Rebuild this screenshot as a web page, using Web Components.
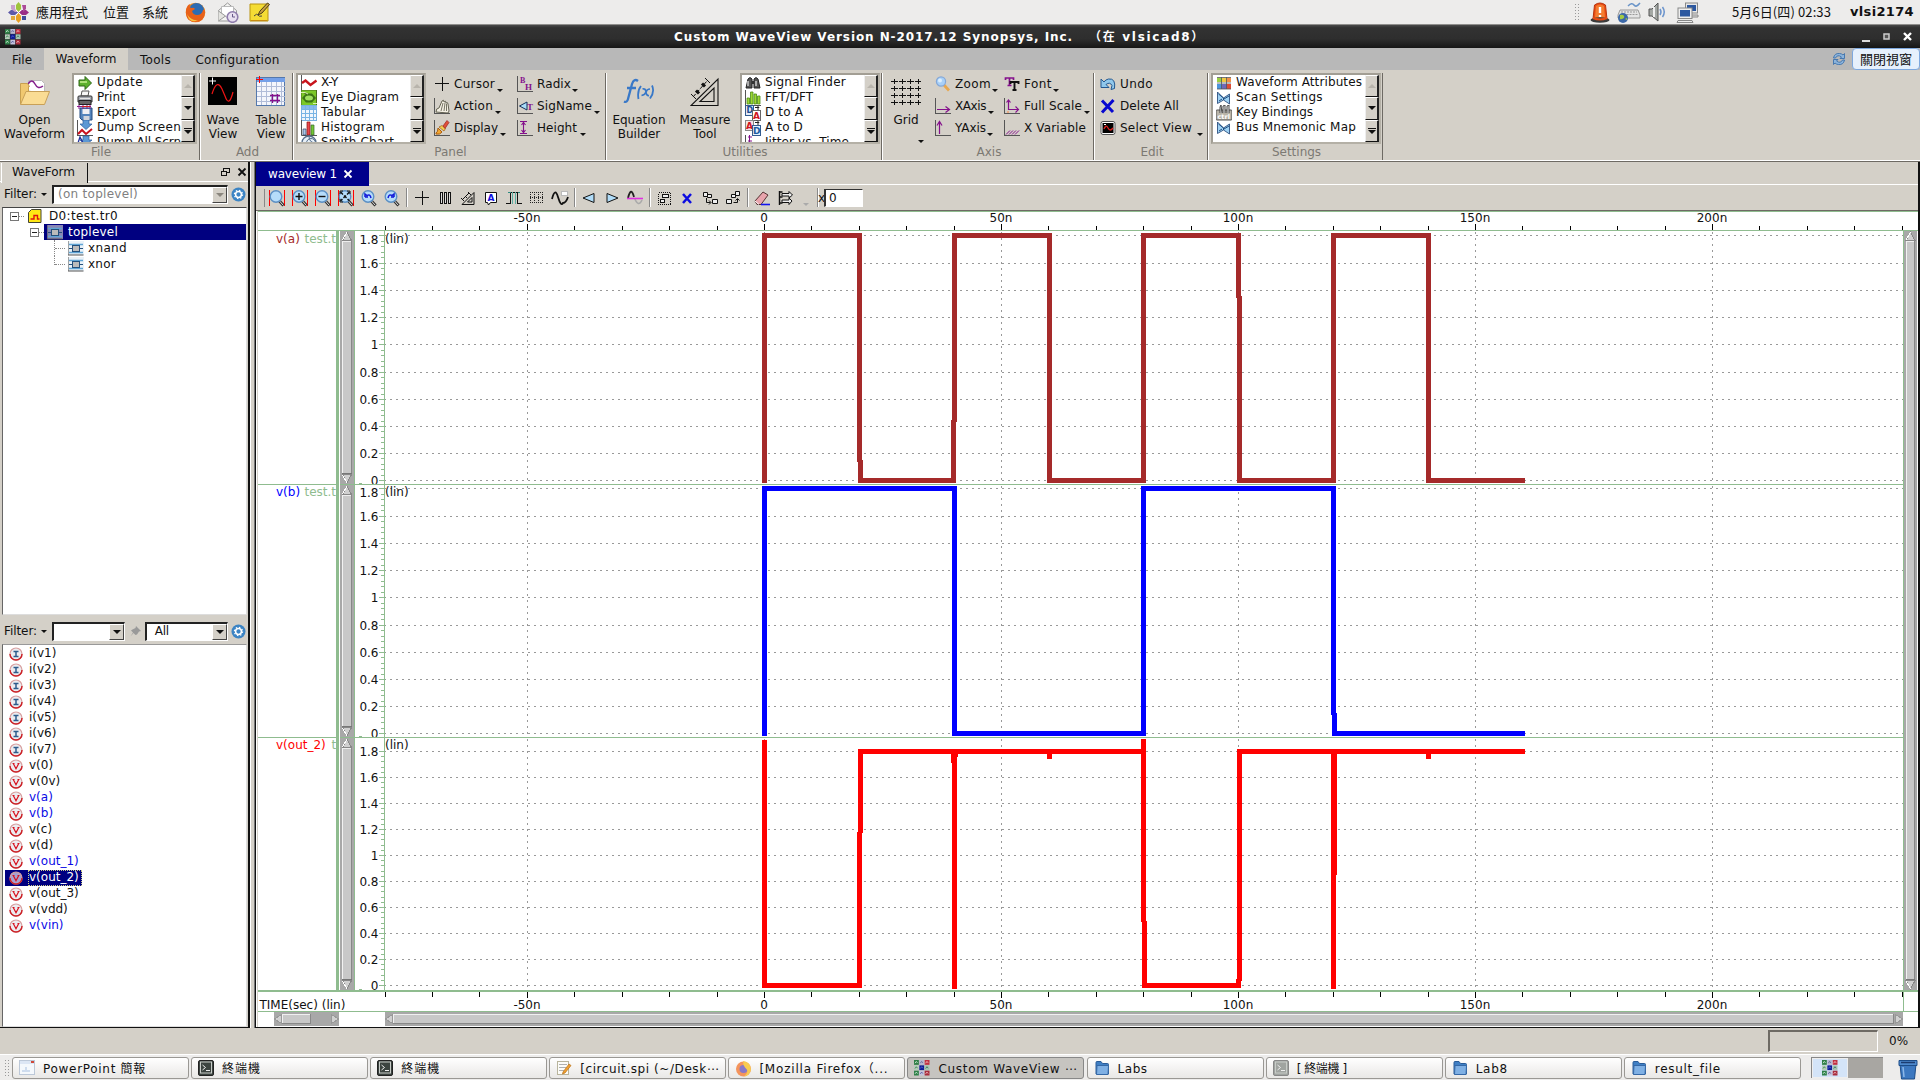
<!DOCTYPE html>
<html lang="zh-Hant">
<head>
<meta charset="utf-8">
<title>Custom WaveView</title>
<style>
html,body{margin:0;padding:0;width:1920px;height:1080px;overflow:hidden;background:#d4d0c8}
body{font:12px/15px "DejaVu Sans","Noto Sans CJK TC",sans-serif;color:#111}
</style>
</head>
<body>
<wave-desktop></wave-desktop>
<script>
const svg=(w,h,body,extra='')=>`<svg width="${w}" height="${h}" viewBox="0 0 ${w} ${h}" ${extra}>${body}</svg>`;
const crisp='shape-rendering="crispEdges"';
const L='<path d="M.5 0v15.5H16" fill="none" stroke="#555" shape-rendering="crispEdges"/>';
const mag=(inner,red)=>svg(18,18,(red?'<path d="M1.500 1v16M16.500 1v16" stroke="#f00" shape-rendering="crispEdges"/>':'')+
 '<path d="M11.500 12l4 4.500" stroke="#333" stroke-width="3"/><path d="M11.500 12l3.500 4" stroke="#ddd" stroke-width="1"/><circle cx="8" cy="7.500" r="5.800" fill="#b5dcfa" stroke="#5b8fc4" stroke-width="1.400"/>'+inner);
const app=(s)=>{const c=['#2e7d45','#b8b8cf','#c03040','#b8ccbc','#101c96','#a8c4b4','#2f8048','#c4c4dc','#a82c3c'],m=['#c8e8d0','#6868a0','#f0b8bc','#3c8c54','#5060d0','#3c7c5c','#c8e8d0','#5858a0','#f0b8bc'],t=s/3;
 return svg(s,s,c.map((k,i)=>{const x=(i%3)*t,y=Math.floor(i/3)*t;return `<rect x="${x}" y="${y}" width="${t-.5}" height="${t-.5}" fill="${k}"/><path d="M${x+1} ${y+t*.6}l1.300-1.800l1.200 1.500" stroke="${m[i]}" stroke-width=".9" fill="none"/>`}).join(''))};
const folder=(s)=>svg(s,s,'<path d="M2 2.500q0-1 1-1h4l1.500 2h5q1 0 1 1V14H2z" fill="#3f7fc4" stroke="#2a5c98"/><path d="M3 5.500h11.500l-.5 9H2.500z" fill="#7fb0e4" stroke="#3568a6"/>');
const term=(a,b)=>svg(16,16,`<rect x=".5" y=".5" width="15" height="15" rx="1.500" fill="${a}" stroke="${b}"/><rect x="2.500" y="2" width="11" height="11" fill="none" stroke="#c8ccc8"/><path d="M4.500 5l3 2.500l-3 2.500M8 10.500h4" fill="none" stroke="#eee"/>`);
const sigv=(c,k)=>svg(14,14,`<circle cx="7" cy="7" r="6" fill="${k||'#ececf0'}" stroke="#d8a0a0" stroke-width="1.200"/><path d="M1 7a6 6 0 0 0 12 0" fill="none" stroke="#cc2026" stroke-width="1.400"/>`+(c=='V'?'<path d="M4.400 4.800L7 9.800l2.600-5M3.500 4.500h2M8.500 4.500h2" stroke="#d8101c" stroke-width="1.200" fill="none"/>':'<path d="M4.500 4.500h5M4.500 9.500h5M7 4.500v5" stroke="#2c5c8c" stroke-width="1.500"/>'));
const block=(d)=>svg(16,15,`<rect width="16" height="14" fill="${d?'#8886b4':'#eaf2f8'}"/><path d="M0 0v14h15.500" stroke="#555" fill="none"/><path d="M1 3.500h14M1 11.500h14" stroke="#5fa4d4" stroke-width="1.500"/><rect x="4.500" y="4.500" width="7" height="6" fill="#bbb" stroke="#24507c"/><path d="M1 7.500h3M12 7.500h3" stroke="#24507c"/>`);
const scan=svg(16,16,'<path d="M1.500 2v11.500l6-3.500l6 4V4l-6 4z" fill="#9fd2f4" stroke="#2c5080" stroke-width=".9"/><path d="M2.500 4l5 4v2M13 6l-5 3M3 11l3-2" fill="none" stroke="#1c4c80"/>');
const I={
centos:svg(21,21,'<path d="M8 7V3l2.500-3L13 3v4l-2.500 3z" fill="#9fc43c"/><path d="M14 8h4l3 2.500L18 13h-4l-3-2.500z" fill="#9a2c86"/><path d="M7 8H3L0 10.500L3 13h4l3-2.500z" fill="#5c58a8"/><path d="M8 14v4l2.500 3L13 18v-4l-2.500-3z" fill="#e8a024"/><path d="M3 3h4v4l3 3H7L3 7z" fill="#c8a0cc"/><path d="M14 3h4v4l-3 3V7z" fill="#ac4c98"/><path d="M3 14l4 0v4H3z" fill="#e0a840"/><path d="M14 14h4v4h-4z" fill="#404c9c"/><path d="M8 8l5 5M13 8l-5 5" stroke="#fff"/>'),
firefox:svg(21,21,'<circle cx="10.500" cy="10.500" r="9.800" fill="#f08a1c"/><circle cx="11.500" cy="8.500" r="7.500" fill="#2c6cb4"/><path d="M1 8q1-5 4-6q-1 3 1 4q3-1 4 1l-3 2q1 4 5 4q5 0 6-5q2-1 2 3q-1 9-9.500 9Q2 20 1 12z" fill="#e8611a"/><path d="M2 12q4 7 11 6q-5 3-9-1z" fill="#fbc440"/>'),
mail:svg(22,21,'<path d="M1.500 8.500l9-7.500l9 7.500v10.500h-18z" fill="#f4f4f2" stroke="#999"/><path d="M4.500 4.500h12v8l-6 3l-6-3z" fill="#fff" stroke="#bbb"/><path d="M1.500 9l7 5l-7 5" fill="#e4e4e0" stroke="#999"/><circle cx="15.500" cy="15" r="5.300" fill="#e8e0f0" stroke="#8e7cac" stroke-width="1.600"/><path d="M15.500 12v3h2.500" fill="none" stroke="#665888"/>'),
note:svg(22,21,'<path d="M1 2h18v17H1z" fill="#f4dc34" stroke="#b89410"/><path d="M2 18h16v1H2z" fill="#c88c10"/><path d="M9 13l2-4L18.500 1l2 1.500L13 11z" fill="#c8a040" stroke="#4a3c14"/><path d="M5 14q3-3 4-1t4 1" fill="none" stroke="#444"/>'),
alarm:svg(20,21,'<path d="M3 17L4.500 3Q10-1 15.500 3L17 17z" fill="#e84c14" stroke="#b8340c"/><path d="M5 16L6 4q4-3 8 0l1 12z" fill="#f47c30"/><ellipse cx="10" cy="18" rx="9.500" ry="2.800" fill="#3c3c3c"/><path d="M3 16q7 3 14 0" stroke="#e84c14" stroke-width="2" fill="none"/><path d="M10 5v6M10 13v2" stroke="#fff" stroke-width="2.400"/>'),
kbd:svg(24,21,'<path d="M11 4q4-4 6-1t6-2" fill="none" stroke="#6a94c8" stroke-width="1.500"/><path d="M3 8h18l2 5v3H1v-3z" fill="#e4e4e4" stroke="#999"/><path d="M4 10h16M3.500 12.500h17" stroke="#999" stroke-dasharray="2 1"/><circle cx="6" cy="16" r="5" fill="#3c68a8"/><path d="M3 13q3-1 4 1t-2 3t-2-1zM8 17l2-1v2z" fill="#a4cc44"/>'),
speaker:svg(20,21,'<path d="M1 7h3l6-6v18l-6-5H1z" fill="#a4a8a4" stroke="#555"/><path d="M6 5v10" stroke="#eee" stroke-width="2"/><path d="M12 7q2 3 0 6M14.500 5q3.500 5 0 10" fill="none" stroke="#6c94cc" stroke-width="1.500"/>'),
pcs:svg(23,21,'<rect x="9.500" y="1" width="12" height="10" fill="#e8e8e8" stroke="#888"/><rect x="11" y="3" width="9" height="6" fill="#2c58a0"/><path d="M12 13h10v2H12z" fill="#ddd" stroke="#888"/><rect x="2" y="6" width="14" height="10.500" fill="#eee" stroke="#888"/><rect x="4" y="8" width="10" height="6.500" fill="#2c58a0"/><path d="M2 18.500h14l1 2H1z" fill="#eee" stroke="#888"/>'),
app16:app(16),
refresh:svg(14,14,'<path d="M1.500 6q1-5 6-4.500q2 0 3.500 1.500l1.500-1.500v5H8l1.500-1.500q-4-3-6 1zM12.500 8q-1 5-6 4.500q-2 0-3.500-1.500l-1.500 1.500v-5H6L4.500 9q4 3 6-1z" fill="#8cb4dc" stroke="#3c70ac" stroke-width=".9"/>'),
min:svg(9,11,'<path d="M.5 8.500h8" stroke="#ddd" stroke-width="2"/>',crisp),
max:svg(9,11,'<rect x="2" y="3" width="5" height="5" fill="#555" stroke="#ccc" stroke-width="1.500"/>'),
close:svg(9,11,'<path d="M1 2l7 7M8 2L1 9" stroke="#fff" stroke-width="2.400"/>'),
open:svg(32,28,'<path d="M9.500 13V2.500h13l3 3V16z" fill="#fff" stroke="#bbb"/><path d="M9 6q4-6 7 0t8 2" fill="none" stroke="#84208c" stroke-width="1.500"/><path d="M1.500 26V5.500h7l2 3h-1V14h15V26z" fill="#f0c870" stroke="#c8a050"/><path d="M1.500 26.500L7 13.500h23.500l-5 13z" fill="#fadc94" stroke="#c8a058"/>'),
waveview:svg(30,29,'<rect width="29" height="28" fill="#000"/><path d="M1 4h7M4.500 .5v7" stroke="#fff"/><path d="M4 17q5-16 10-5l3 7q4 12 8-4" fill="none" stroke="#f01414" stroke-width="1.200"/>'),
table:svg(30,31,'<rect x=".5" y="1.500" width="28" height="28" fill="#f4f6fc" stroke="#5478ac"/><rect x="1" y="2" width="28" height="4" fill="#74a0e8"/><path d="M5.500 6v23M10.500 6v23M15.500 6v23M20.500 6v23M25.500 6v23M1 10.500h28M1 15.500h28M1 20.500h28M1 25.500h28" stroke="#b0bcd8" shape-rendering="crispEdges"/><path d="M0 3.500h7M3.500 0v7" stroke="#f00" /><path d="M16.500 18v9M21.500 18v9M14 19.500h10M14 24.500h10" stroke="#84108c" stroke-width="1.300"/>'),
fx:svg(34,28,'<path d="M16 3q-4-3-6 3L6 21q-1 4-4 2.500M5 10h9" fill="none" stroke="#3878c8" stroke-width="2.300"/><path d="M19 8q-4 5-2.500 13M30 7.500q3 6-2 13" fill="none" stroke="#3878c8" stroke-width="1.800"/><path d="M20.500 11q3-1 3.500 3t3 3.500M28 11q-3 0-4 3t-4.500 3.500" fill="none" stroke="#3878c8" stroke-width="1.700"/>'),
measure:svg(30,30,'<path d="M1 28.500h27V2zM10 24.500h14V11z" fill="none" stroke="#111" stroke-width="1.100"/><path d="M3 20L17 4" stroke="#111" stroke-dasharray="4 1.500"/><path d="M1 17l5 5M15 1l5 5" stroke="#111"/><path d="M6 13.500l3 3M12 6.500l3 3" stroke="#111" stroke-width="3"/>'),
grid:svg(30,30,[4,11,18,25].map(y=>[3,11,19,27].map(x=>`<path d="M${x-3} ${y}.5h${x>20?6:7}M${x}.5 ${y-2}v5" stroke="#111"/>`).join('')).join(''),crisp),
update:svg(16,16,'<path d="M2 5h6V1.500l6.500 6.500L8 14.500V11H2z" fill="#5cb02c" stroke="#2c6414"/><path d="M3 7h7" stroke="#c8f090" stroke-width="1.500"/>'),
print:svg(16,16,'<path d="M4 6l1-5h7l-1 5z" fill="#f8f8f8" stroke="#555"/><path d="M1 7q0-1 1-1h12q1 0 1 1v5H1z" fill="#a4a8b0" stroke="#333"/><rect x="2" y="10.500" width="12" height="4" fill="#666" stroke="#222"/><path d="M3 8.500h10" stroke="#e4e4e4"/>'),
export:svg(16,16,'<path d="M3 3h12v12H5l-2-2z" fill="#5484bc" stroke="#244c80"/><rect x="5.500" y="4" width="7" height="5" fill="#f0f0f4"/><rect x="6.500" y="11" width="6" height="4" fill="#d0d4dc"/><path d="M0 1.500h14M2 4V0M6 4V0M10 4V0M13 4V0" stroke="#8c1c8c"/><path d="M5 1.500h8" stroke="#d02020"/>'),
dump:svg(16,16,L+'<path d="M6 0h6v4h3L9 9.500L3 4h3z" fill="#5c98d4" stroke="#2c5c9c" stroke-width=".7"/><path d="M1 14l4-4l4 4l6-5" fill="none" stroke="#c8101c" stroke-width="2"/>'),
dumpall:svg(16,16,'<path d="M6 1h6v4h3l-6 5L3 5h3z" fill="#5c98d4" stroke="#2c5c9c" stroke-width=".7"/><path d="M1 8l2-6l3 6M1 10l4-2l4 5l6-4" fill="none" stroke="#20309c" stroke-width="1.300"/><path d="M1 12l5-2l4 4l5-3" fill="none" stroke="#c8101c" stroke-width="1.500"/>'),
xy:svg(16,16,'<path d="M.5 0v15" stroke="#555"/><path d="M1 8l3.500-2.500l5 4.500L15.500 5.500" fill="none" stroke="#c8141c" stroke-width="2.400"/>'),
eye:svg(16,16,'<rect width="15.500" height="15.500" fill="#7cc828" stroke="#486c1c"/><path d="M1 8L5 3.500h6L15 8l-4 4.500H5z" fill="#3c7414"/><ellipse cx="8" cy="8" rx="4" ry="2.500" fill="#a0e060"/><path d="M0 2.500h4l3 1.500M16 13.500h-4" stroke="#d8f0b0"/>'),
tabular:svg(16,16,'<rect x=".5" y=".5" width="15" height="15" fill="#f0f6fc" stroke="#78b0e0"/><rect x="1" y="1" width="15" height="3" fill="#88b8ec"/><path d="M4.500 1v15M8.500 1v15M12.500 1v15M0 4.500h16M0 8.500h16M0 12.500h16" stroke="#78b4e4"/>',crisp),
histo:svg(16,16,'<path d="M.5 0v15.500H16" stroke="#555" fill="none"/><path d="M2 9h3v6H2z" fill="#a8c8e8" stroke="#346" stroke-width=".7"/><path d="M6 2h3v13H6z" fill="#e8484c" stroke="#811" stroke-width=".7"/><path d="M10 5h3v10h-3z" fill="#74c834" stroke="#363" stroke-width=".7"/>'),
smith:svg(16,16,'<circle cx="8" cy="8" r="7" fill="#e8f0f8" stroke="#58708c" stroke-width="1.300"/><circle cx="10" cy="8" r="4.500" fill="none" stroke="#58708c"/><path d="M1 8h14M8 1q0 7 7 7" fill="none" stroke="#58708c"/>'),
cursor:svg(16,16,'<path d="M1 7.500h14M8.500 1v14" stroke="#111"/>',crisp),
action:svg(16,16,L+'<path d="M2 14q0-4 3-4l3-7q2-2 2 1q2-2 2 1q2-1 2 1l1 7l-1 2z" fill="#f4f0e4" stroke="#554" stroke-width=".9"/><path d="M7 13L9 5M10 13l1-8M12.500 13V6" stroke="#554" stroke-width=".8"/>'),
display:svg(16,16,L+'<path d="M2 13q2-1 2-5l4 4q-2 3-6 2z" fill="#f4a830" stroke="#a85c10"/><path d="M5 7l5 4l1.500-2.500l-3.500-3z" fill="#f0d050" stroke="#a85c10" stroke-width=".7"/><path d="M9 6l4-5.500l2 2L11 8.500z" fill="#e05038" stroke="#922" stroke-width=".7"/>'),
radix:svg(17,17,L+'<text x="3" y="7" font-family="Liberation Serif" font-size="8" font-weight="bold" fill="#84108c">B</text><text x="8" y="14" font-family="Liberation Serif" font-size="9" font-weight="bold" fill="#84108c">H</text>'),
signame:svg(17,17,L+'<path d="M2.500 8L10 4v8z" fill="#a8dcf8" stroke="#14305c"/><text x="10" y="12" font-family="Liberation Serif" font-size="9" font-weight="bold" fill="#84108c">T</text>'),
height:svg(16,16,L+'<path d="M3 1.500h7M3 13.500h7M6.500 2v11M4.500 5l2-2.500l2 2.500M4.500 10l2 2.500l2-2.500" fill="none" stroke="#84108c" stroke-width="1.100"/>'),
binoc:svg(16,16,'<path d="M1 13l2-9q2-3 4 0v9zM9 13V4q2-3 4 0l2 9z" fill="#555" stroke="#222"/><path d="M3 11V6M11 11V6" stroke="#ddd" stroke-width="1.300"/><path d="M7 6h2v3H7z" fill="#333"/>'),
fft:svg(16,16,'<path d="M.5 0v15.500H16" stroke="#555" fill="none"/><path d="M2 8h2.500v6H2zM5.500 2H8v12H5.500zM9 4h2.500v10H9zM12.500 6H15v8h-2.500z" fill="#9cd834" stroke="#4c8c14" stroke-width=".8"/>'),
d2a:svg(16,16,'<rect x=".5" y=".5" width="8" height="10" fill="#e4ecf8" stroke="#345c90"/><text x="1.500" y="8" font-size="8" font-weight="bold" fill="#1c4c90" font-family="DejaVu Sans">D</text><rect x="7.500" y="5.500" width="8" height="10" fill="#fff" stroke="#666"/><text x="8" y="14" font-size="9" font-weight="bold" fill="#d01420" font-family="DejaVu Sans">A</text><path d="M10 2.500h4l-2-2M13 5V3" stroke="#222" fill="none"/>'),
a2d:svg(16,16,'<rect x=".5" y=".5" width="8" height="10" fill="#f4e4e4" stroke="#888"/><text x="1" y="8.500" font-size="9" font-weight="bold" fill="#d01420" font-family="DejaVu Sans">A</text><rect x="7.500" y="5.500" width="8" height="10" fill="#e4f0fc" stroke="#345c90"/><text x="8" y="14" font-size="9" font-weight="bold" fill="#1c5ca0" font-family="DejaVu Sans">D</text><path d="M10 2.500h4l-2-2M13 5V3" stroke="#222" fill="none"/>'),
jitter:svg(16,16,'<path d="M.5 0v16" stroke="#555"/><path d="M3 2h4M3 6h4M4.500 0v12M3 9h4" stroke="#84108c"/>'),
zoom:svg(16,16,'<path d="M9 9l5 5.500" stroke="#e8a850" stroke-width="2.800"/><circle cx="6" cy="5.500" r="4.600" fill="#a8d0f8" stroke="#84a8d8" stroke-width="1.200"/><circle cx="5" cy="4.500" r="2" fill="#dceefc"/>'),
xaxis:svg(16,16,L+'<path d="M2 11.500h12M10.500 8.500l4 3l-4 3" fill="none" stroke="#84108c" stroke-width="1.200"/>'),
yaxis:svg(16,16,L+'<path d="M4.500 14V2M2 5.500l2.500-4l2.500 4" fill="none" stroke="#84108c" stroke-width="1.200"/>'),
font:svg(16,16,'<path d="M1.500 4V2h8v2M5.500 2v8M3.500 9.500h4" fill="none" stroke="#84108c" stroke-width="1.700"/><path d="M6.500 8V6h8v2M10.500 6v8M8.500 14h4" fill="none" stroke="#111" stroke-width="1.900"/>'),
full:svg(16,16,L+'<path d="M4.500 12V2M2.500 4.500L4.500 2l2 2.500M4.500 11.500h10M11.500 8.500l3 3l-3 3" fill="none" stroke="#84108c" stroke-width="1.200"/><path d="M4 13v2" stroke="#f84"/>'),
xvar:svg(16,16,L+'<path d="M2 14.500l4-4M5 14.500l4-4M8 14.500l4-4M11 14.500l4-4" stroke="#84108c"/>'),
undo:svg(16,16,'<path d="M1 3v8.500h8L6 8.500q4-3 6 1l-1 4l3.500-1Q16 2 8.500 3Q5.500 3.500 4 6z" fill="#90c8ec" stroke="#245890"/>'),
delall:svg(16,16,'<path d="M2 2.500l11 11.500M13.500 2L2 14.500" stroke="#0808d0" stroke-width="3"/>'),
selview:svg(16,16,'<rect x="1" y="1.500" width="14" height="13" rx="2" fill="#fff" stroke="#555"/><rect x="2.500" y="3" width="11" height="10" fill="#000"/><path d="M4 9q2-5 4-1t5 0" fill="none" stroke="#e02020" stroke-width="1.300"/><path d="M4 4.500h2" stroke="#fff"/>'),
attrs:svg(16,16,'<path d="M1 3h5v4H1z" fill="#9cd040"/><path d="M6 3h5v4H6z" fill="#f0c840"/><path d="M11 3h4v4h-4z" fill="#f09048"/><path d="M1 9h5v5H1z" fill="#4c94dc"/><path d="M6 9h5v5H6z" fill="#7068b8"/><path d="M11 9h4v5h-4z" fill="#e04c34"/><path d="M1 2.500h14M1 8h14M1 14h14M5.500 2v12M10.500 2v12" stroke="#555" stroke-width=".8"/>'),
scan,
keyb:svg(16,16,'<rect x="0" y="5" width="16" height="10" rx="1" fill="#b8b4a8" stroke="#555"/><path d="M4 8V2l1-2l1 8M7 8V1l2-1v8M11 8V1l2-1v8" fill="#eee" stroke="#333" stroke-width=".9"/><text x="1.500" y="14" font-size="6.500" font-weight="bold" fill="#fff" font-family="DejaVu Sans">ctrl</text>'),
gear:svg(15,15,'<circle cx="7.500" cy="7.500" r="7" fill="#3c84c4"/><circle cx="7.500" cy="7.500" r="2.900" fill="none" stroke="#fff" stroke-width="1.500"/><circle cx="7.500" cy="7.500" r="4.100" fill="none" stroke="#fff" stroke-width="1.200" stroke-dasharray="1.400 1.820"/>'),
pin:svg(13,13,'<path d="M7 1l5 5l-2 .5l-2 3l-1.500 .5L4.500 8l-3 3.500L4 7.500L2 5.500l1.500-1L6.500 3z" fill="#999"/>'),
float:svg(10,10,'<path d="M3.500 4V1h5.500v4.500H6.500M3.500 1.500h5.500" fill="none" stroke="#111"/><path d="M1 4.500h5.500v4H1zM1 4h5.500" fill="none" stroke="#111"/>',crisp),
x10:svg(10,10,'<path d="M1.500 1.500l7 7M8.500 1.500l-7 7" stroke="#111" stroke-width="1.800"/>'),
xw:svg(10,10,'<path d="M1.500 1.500l7 7M8.500 1.500l-7 7" stroke="#fff" stroke-width="1.800"/>'),
trfile:svg(14,14,'<path d="M.500 3.500l3-3h9.500v13H.500z" fill="#ffe814" stroke="#443"/><path d="M2.500 10h3.500V6.500h3.500V10h2" fill="none" stroke="#e01010" stroke-width="1.400"/>'),
blk:block(false),blkd:block(true),
sI:sigv('I'),sV:sigv('V'),sVs:sigv('V','#a8a0d0'),
z1:mag('',1),
z2:mag('<path d="M4.500 7.500h7M8 4v7" stroke="#111" stroke-width="1.400"/>',1),
z3:mag('<path d="M4.500 7.500h7" stroke="#111" stroke-width="1.400"/>',1),
z4:mag('<path d="M3.500 3l9 9M12.500 3l-9 9" stroke="#111" stroke-width="1.400" stroke-dasharray="3.500 1.500"/><path d="M3 2h3M10 2h3M3 13h3M3 2v3M13 2v3M3 10v3" stroke="#111"/>',1),
z5:mag('<path d="M5 8V5l2 1.500q3-2 4 2.500M5 8h3" fill="none" stroke="#1018d8" stroke-width="1.500"/>'),
z6:mag('<path d="M11 8V5L9 6.500q-3-2-4 2.500M11 8H8" fill="none" stroke="#1018d8" stroke-width="1.500"/>'),
bars:svg(18,18,'<path d="M4.500 3.500h2v11h-2zM8.500 3.500h2v11h-2zM12.500 3.500h2v11h-2z" fill="#ddd" stroke="#111"/>',crisp),
tri:svg(18,18,'<path d="M3 15.500h12V3.500zM8.500 13h4.500V8.500z" fill="none" stroke="#111"/><path d="M3 11l7-7M2 9l3 3M9 3l3 3M6 7l2 2" stroke="#111"/>'),
abox:svg(18,18,'<path d="M3.500 3.500h11v10h-6l-2 2.500l-1-2.500h-2z" fill="#fff" stroke="#111"/><text x="5.500" y="11.500" font-size="9" font-weight="bold" fill="#1010e0" font-family="DejaVu Sans">A</text>'),
pulse:svg(18,18,'<path d="M1 14.500h4.500v-11h3M9 3.500h3.500v11H17" fill="none" stroke="#111"/><path d="M7.500 3v12M10.500 3v12" stroke="#5cb0a4"/><path d="M3 3.500h3M13 3.500h2" stroke="#2c8c80"/>',crisp),
dots:svg(18,18,[3,8,13].map(y=>`<path d="M2 ${y}.5h14" stroke="#222" stroke-dasharray="1 1"/>`).join('')+[3,7,11,15].map(x=>`<path d="M${x-1}.5 3v12" stroke="#222" stroke-dasharray="1 1"/>`).join(''),crisp),
curve:svg(18,18,'<path d="M1 10q3-12 6-2t5 6q3 0 5-6" fill="none" stroke="#111" stroke-width="1.800"/><rect x="10.500" y="2.500" width="6" height="4" fill="#fff" stroke="#bbb"/>'),
left:svg(18,18,'<path d="M3 9l11-4.500v9z" fill="#b0dcf8" stroke="#111"/>'),
right:svg(18,18,'<path d="M15 9L4 4.500v9z" fill="#b0dcf8" stroke="#111"/>'),
curve2:svg(18,18,'<path d="M2 9q3-12 6-1" fill="none" stroke="#222" stroke-width="1.800"/><path d="M8.500 9q4 10 7.500 2" fill="none" stroke="#aaa" stroke-width="1.600"/><path d="M1 9.500h16" stroke="#e030e0" stroke-width="1.600"/>'),
dsel:svg(18,18,'<rect x="3.500" y="3.500" width="12" height="12" fill="none" stroke="#111" stroke-dasharray="1 1"/><path d="M7.500 5.500h6v3h-6zM5.500 10.500h4v3h-4z" fill="#eee" stroke="#111"/>',crisp),
bx:svg(18,18,'<path d="M5 5l8 9M13 5l-8 9" stroke="#0c0ce0" stroke-width="2.500"/>'),
move1:svg(18,18,'<path d="M2.500 3.500h4v4h-4zM6.500 5.500h4v3h-4zM11.500 10.500h5v4h-5z" fill="#eee" stroke="#111"/><path d="M5.500 9v4.500h4M8 11.500l2 2l-2 2" fill="none" stroke="#111"/>'),
move2:svg(18,18,'<path d="M11.500 2.500h4v4h-4zM7.500 5.500h4v3h-4zM2.500 10.500h5v4h-5z" fill="#eee" stroke="#111"/><path d="M9.500 13.500h4V10M11.500 11.500l2-2l2 2" fill="none" stroke="#111"/>'),
eraser:svg(18,18,'<path d="M2 12L10 3l5 3l-7 9.500H4z" fill="#e8a4ac" stroke="#533"/><path d="M2 12l4 3.500" stroke="#fff"/><path d="M8 15.500h9" stroke="#1414f0" stroke-width="1.600"/>'),
arrows:svg(18,18,'<path d="M3.500 2v14M3.500 3h3M3.500 8h3M3.500 14h3" stroke="#111" stroke-width="1.400"/><path d="M6 4.500h7V2.500l3.500 3.500L13 9V7H6zM6 11h7V9l3 3l-3 3.500v-2H6z" fill="#eee" stroke="#111"/>'),
term:term('#3c4440','#222'),term2:term('#a0a4a0','#888'),folder:folder(16),
doc:svg(16,16,'<rect x=".5" y=".5" width="15" height="14" fill="#f4f8fc" stroke="#bcc8d8"/><path d="M1 1h14v3H1z" fill="#dce6f4"/><path d="M3 11h8M7 7v3" stroke="#a8c0e0"/><rect x="12" y="1" width="3" height="2" fill="#d04838"/>'),
gedit:svg(16,16,'<rect x="1.500" y="1.500" width="11" height="13" fill="#fcfcf8" stroke="#b8b49c"/><path d="M3 4.500h8M3 7.500h7M3 10.500h5" stroke="#b0b0b0"/><path d="M7 12l6-8l2 1.500L9 13l-2.500 1z" fill="#f0a030" stroke="#b87018" stroke-width=".7"/>'),
ff2:svg(17,17,'<circle cx="8.500" cy="9" r="7.500" fill="#f4945c"/><circle cx="8.500" cy="9" r="4" fill="#8878c8"/><path d="M8 1q8 1 8 9q-2 6-7 6.500q6-5 1-9q-2-2-2-6.500z" fill="#f8cc50"/>'),
trash:svg(22,22,'<path d="M3 6h16l-1.500 15h-13z" fill="#3c78c0" stroke="#1c4c88"/><path d="M2 2.500h18v5H2z" fill="#4c88cc" stroke="#1c4c88"/><path d="M4 4.500h14" stroke="#1c3c70" stroke-width="1.500"/><path d="M6 9l1 10" stroke="#8cb8e8" stroke-width="1.500"/>')
};
function def(name,css,html,init){
  customElements.define(name,class extends HTMLElement{
    connectedCallback(){
      if(this.shadowRoot)return;
      const r=this.attachShadow({mode:'open'});
      const a=k=>this.getAttribute(k)||'';
      r.innerHTML=`<style>*{box-sizing:border-box}svg{display:block;flex:none}${css}</style>`+(typeof html==='function'?html(a,this):html);
      if(init)init(this,r);
    }
  });
}
def('ui-icon',':host{display:inline-flex;flex:none;align-items:center;justify-content:center}',a=>I[a('n')]||'');
/* Text run that spreads its letters to a nominal width */
def('fit-text',':host{display:inline-block;white-space:pre;flex:none}','<span><slot></slot></span>',(h,r)=>{
  const w=+h.getAttribute('w');if(!w)return;
  const s=r.querySelector('span'),n=[...h.textContent].length;
  const m=s.getBoundingClientRect().width;
  h.style.letterSpacing=((w-m)/n)+'px';
});
const T=(t,w)=>`<fit-text${w?` w="${w}"`:''}>${t}</fit-text>`;
def('top-panel',`:host{display:flex;height:25px;background:#edeceb;border-bottom:1px solid #8f8e8c;align-items:center}
 .cj{font:13px/24px "Noto Sans CJK TC",sans-serif}ui-icon,span{flex:none}.sp{flex:1}.b{font-weight:bold;font-size:13px;line-height:20px;padding-bottom:1px}
 .grip{width:5px;height:18px;background:radial-gradient(#999 .8px,transparent 1px) 0 0/3px 3px}`,
 ()=>`<ui-icon n="centos" style="margin-left:8px;width:21px"></ui-icon>
 <span class="cj" style="margin-left:7px;width:67px">${T('應用程式',52)}</span><span class="cj" style="width:39px">${T('位置',26)}</span><span class="cj" style="width:43px">${T('系統',26)}</span>
 <ui-icon n="firefox" style="width:21px"></ui-icon><ui-icon n="mail" style="margin-left:11px;width:22px"></ui-icon><ui-icon n="note" style="margin-left:10px;width:22px"></ui-icon>
 <span class="sp"></span><span class="grip"></span>
 <ui-icon n="alarm" style="margin-left:11px"></ui-icon><ui-icon n="kbd" style="margin-left:7px"></ui-icon><ui-icon n="speaker" style="margin-left:7px"></ui-icon><ui-icon n="pcs" style="margin-left:8px"></ui-icon>
 <span class="cj" style="margin-left:33px;width:118px">${T('5月6日(四) 02:33',99)}</span><span class="b" style="width:70px">${T('vlsi2174',64)}</span>`);
def('title-bar',`:host{display:flex;height:23px;background:linear-gradient(#4a4a4a,#323232 12%,#2e2e2e 60%,#161616);color:#fff;align-items:center;font-weight:bold}
 .t{margin-left:653px;flex:1;white-space:pre;padding-top:2px}ui-icon{margin-right:12px}`,
 ()=>`<ui-icon n="app16" style="margin:0 0 0 5px"></ui-icon><span class="t">${T('Custom WaveView Version N-2017.12 Synopsys, Inc.',399)}<span style="display:inline-block;width:16px"></span>${T('（在 vlsicad8）',116)}</span>
 <ui-icon n="min" style="margin-top:2px"></ui-icon><ui-icon n="max"></ui-icon><ui-icon n="close" style="margin-right:8px"></ui-icon>`);
def('menu-tabs',`:host{display:flex;height:22px;background:#b8b8b8;align-items:center}
 span{height:22px;line-height:24px;text-align:center;flex:none}.on{background:#d4d0c8;line-height:22px}
 .close{border:1px solid #7ea8de;border-radius:4px;background:#e6f0fc;width:68px;font:13px/20px "Noto Sans CJK TC",sans-serif;margin-left:6px}`,
 ()=>`<span style="width:44px">${T('File',20)}</span><span class="on" style="width:84px">${T('Waveform',61)}</span><span style="width:55px">${T('Tools',31)}</span><span style="width:109px">${T('Configuration',84)}</span>
 <span style="flex:1"></span><ui-icon n="refresh"></ui-icon><span class="close">${T('關閉視窗',52)}</span>`);
def('ribbon-group',`:host{display:flex;flex-direction:column;flex:none;height:87px;box-shadow:inset 1px 0 #fff,inset -1px 0 #6e6a64}
 :host([first]){box-shadow:inset -1px 0 #6e6a64}.c{display:flex;height:71px;align-items:flex-start}.l{height:16px;text-align:center;color:#7c7973;line-height:16px;padding-left:2px}`,
 a=>`<div class="c"><slot></slot></div><div class="l">${T(a('label'))}</div>`,(h)=>{h.style.width=h.getAttribute('w')+'px'});
def('big-button',`:host{display:flex;flex-direction:column;align-items:center;height:71px;position:relative}
 ui-icon{height:37px}.t{margin-top:3px;line-height:14px;text-align:center}i{position:absolute;right:0;bottom:1px;border:3px solid transparent;border-top-color:#111;border-bottom:0}`,
 a=>`<ui-icon n="${a('icon')}"></ui-icon><div class="t">${a('a')}<br>${a('b')||'&nbsp;'}</div>${a('arrow')?'<i></i>':''}`,h=>{h.style.width=h.getAttribute('w')+'px'});
def('small-button',`:host{display:flex;align-items:center;height:22px}ui-icon{width:16px;margin-right:4px}i{margin:12px 0 0 var(--g,3px);border:3px solid transparent;border-top-color:#111;border-bottom:0}`,
 a=>`<ui-icon n="${a('icon')}"></ui-icon>${T(a('t'),a('w'))}${a('g')?`<i style="--g:${a('g')}px"></i>`:''}`);
def('button-col',':host{display:flex;flex-direction:column;flex:none}','<slot></slot>');
def('scroll-steps',`:host{display:flex;flex-direction:column;width:14px;flex:none}
 b{flex:1;display:flex;flex-direction:column;align-items:center;justify-content:center;gap:1px;background:#d4d0c8;border:1px solid #fff;border-right:2px solid #222;border-bottom:1px solid #111;border-left-color:#eee}
 i{border:4px solid transparent;border-top-color:#111;border-bottom:0}.u{border-bottom:4px solid #b8b4ac;border-top:0}u{width:8px;height:1px;background:#111}`,
 '<b><i class="u"></i></b><b><i></i></b><b><u></u><i></i></b>');
def('gallery-list',`:host{display:flex;height:71px;border:2px solid #a29e94;border-right-color:#b4b0a6;border-bottom-color:#b4b0a6;background:#fff;flex:none;overflow:hidden}
 .i{flex:1;padding-left:3px;overflow:hidden}.r{display:flex;height:15px;align-items:center;white-space:pre}ui-icon{width:16px;height:15px;margin-right:4px}`,
 a=>`<div class="i">${a('items').split('|').map(s=>{const[k,t,w]=s.split(':');return `<div class="r"><ui-icon n="${k}"></ui-icon>${T(t,w)}</div>`}).join('')}</div><scroll-steps></scroll-steps>`,
 h=>{h.style.width=h.getAttribute('w')+'px'});
def('tool-ribbon',`:host{display:flex;height:92px;padding-top:3px;background:#d4d0c8;border-bottom:1px solid #6e6a64;box-shadow:inset 0 -1px #fff}`,
 ()=>`<ribbon-group first w="200" label="File"><big-button w="69" icon="open" a="Open" b="Waveform"></big-button>
 <gallery-list style="margin-left:3px" w="125" items="update:Update:46|print:Print:28|export:Export:39|dump:Dump Screen:84|dumpall:Dump All Scrn:84"></gallery-list></ribbon-group>
 <ribbon-group w="93" label="Add"><big-button w="46" icon="waveview" a="Wave" b="View"></big-button><big-button w="50" icon="table" a="Table" b="View" style="margin-right:-3px"></big-button></ribbon-group>
 <ribbon-group w="313" label="Panel"><gallery-list style="margin-left:3px" w="130" items="xy:X-Y:17|eye:Eye Diagram:78|tabular:Tabular:45|histo:Histogram:64|smith:Smith Chart:73"></gallery-list>
 <button-col style="margin-left:8px;width:83px"><small-button icon="cursor" t="Cursor" w="41" g="2"></small-button><small-button icon="action" t="Action" w="39" g="2"></small-button><small-button icon="display" t="Display" w="44" g="2"></small-button></button-col>
 <button-col><small-button icon="radix" t="Radix" w="34" g="1"></small-button><small-button icon="signame" t="SigName" w="55" g="2"></small-button><small-button icon="height" t="Height" w="40" g="3"></small-button></button-col></ribbon-group>
 <ribbon-group w="276" label="Utilities"><big-button w="66" icon="fx" a="Equation" b="Builder"></big-button><big-button w="66" icon="measure" a="Measure" b="Tool"></big-button>
 <gallery-list style="margin-left:2px" w="140" items="binoc:Signal Finder:81|fft:FFT/DFT:48|d2a:D to A:38|a2d:A to D:38|jitter:Jitter vs. Time:84"></gallery-list></ribbon-group>
 <ribbon-group w="212" label="Axis"><big-button w="42" style="padding-left:6px;box-sizing:border-box;width:42px" icon="grid" a="Grid" arrow="1"></big-button>
 <button-col style="margin-left:11px;width:69px"><small-button icon="zoom" t="Zoom" w="36" g="1"></small-button><small-button icon="xaxis" t="XAxis" w="31" g="2"></small-button><small-button icon="yaxis" t="YAxis" w="31" g="1"></small-button></button-col>
 <button-col><small-button icon="font" t="Font" w="28" g="1"></small-button><small-button icon="full" t="Full Scale" w="58" g="2"></small-button><small-button icon="xvar" t="X Variable" w="62"></small-button></button-col></ribbon-group>
 <ribbon-group w="114" label="Edit"><button-col style="margin-left:6px"><small-button icon="undo" t="Undo" w="33"></small-button><small-button icon="delall" t="Delete All" w="59"></small-button><small-button icon="selview" t="Select View" w="72" g="5"></small-button></button-col></ribbon-group>
 <ribbon-group w="175" label="Settings"><gallery-list style="margin-left:3px" w="170" items="attrs:Waveform Attributes:126|scan:Scan Settings:87|keyb:Key Bindings:77|scan:Bus Mnemonic Map:120"></gallery-list></ribbon-group>`);
def('combo-box',`:host{display:flex;height:19px;background:#fff;border:1px solid #fff;border-top:2px solid #222;border-left:2px solid #222;flex:none;align-items:stretch}
 span{flex:1;padding-left:4px;line-height:15px;white-space:pre}b{width:15px;background:#d4d0c8;border:1px solid #fff;border-right-color:#444;border-bottom-color:#444;display:flex;align-items:center;justify-content:center}i{border:4px solid transparent;border-top:4px solid var(--a,#111);border-bottom:0}
 :host([dim]){--a:#8a867e;color:#808080;background:#fff}`,
 a=>`<span>${a('t')?T(a('t'),a('tw')):''}</span><b><i></i></b>`,h=>{h.style.width=h.getAttribute('w')+'px'});
def('filter-row',`:host{display:flex;align-items:center;flex:none;height:25px;padding-left:4px}.f{width:37px;flex:none}.d{border:3px solid transparent;border-top:3px solid #111;border-bottom:0;margin-right:5px}`,
 ()=>`<span class="f">${T('Filter:',33)}</span><i class="d"></i><slot></slot>`);
def('tree-node',`:host{display:flex;height:16px;align-items:center;flex:none}.p{width:9px;height:9px;border:1px solid #777;background:linear-gradient(#222,#222) center/5px 1px no-repeat #fff}
 .g{width:0;height:16px;border-left:1px dotted #888}.h{height:1px;border-top:1px dotted #888}.t{display:flex;align-items:center;height:16px;padding-left:3px;flex:1}:host([sel]) .t{background:#000080;color:#fff}`,
 a=>`<span style="width:${a('ind')}px"></span>${a('box')?'<span class="p"></span><span class="h" style="width:5px"></span>':`<span class="g" ${a('last')?'style="height:9px;align-self:flex-start"':''}></span><span class="h" style="width:10px"></span>`}<span class="t"><ui-icon n="${a('icon')}" style="width:16px;margin-right:${a('gap')||4}px"></ui-icon>${T(a('t'),a('w'))}</span>`);
def('signal-row',`:host{display:flex;height:16px;align-items:center;width:max-content;padding-left:4px}ui-icon{margin-right:5px}.t{padding:0 3px 0 1px;height:16px;line-height:15px}
 :host([blue]){color:#0a0ae6}:host([sel]){background:#000080;color:#fff}:host([sel]) .t{outline:1px dotted #cc8;outline-offset:-1px}`,
 a=>`<ui-icon n="${a('icon')}"></ui-icon><span class="t">${T(a('t'))}</span>`);
def('left-dock',`:host{display:flex;flex-direction:column;width:250px;height:866px;background:#d4d0c8;border-right:2px solid #111;flex:none}
 .h{display:flex;height:20px;align-items:center;border-bottom:1px solid #fff}.tab{width:87px;height:20px;border-right:1px solid #111;border-left:1px solid #fff;margin-left:1px;padding-left:10px;line-height:18px;background:#d4d0c8;position:relative;top:1px}
 .box{background:#fff;border:1px solid #777;border-top:1px solid #444;border-left:1px solid #666;border-bottom-color:#ddd;border-right-color:#ddd;margin:0 1px 0 2px}`,
 ()=>`<div class="h"><span class="tab">${T('WaveForm',63)}</span><span style="flex:1"></span><ui-icon n="float" style="margin-right:7px"></ui-icon><ui-icon n="x10" style="margin-right:1px"></ui-icon></div>
 <filter-row><combo-box dim w="176" t="(on toplevel)" tw="80"></combo-box><ui-icon n="gear" style="margin-left:3px"></ui-icon></filter-row>
 <div class="box" style="height:408px"><tree-node ind="7" box="1" icon="trfile" t="D0:test.tr0" w="69" gap="6"></tree-node>
 <tree-node sel ind="27" box="1" icon="blkd" t="toplevel" w="50" gap="5"></tree-node><tree-node ind="51" icon="blk" t="xnand" w="39"></tree-node><tree-node ind="51" icon="blk" last="1" t="xnor" w="28"></tree-node></div>
 <filter-row style="height:29px;padding-top:4px;box-sizing:border-box"><combo-box w="73"></combo-box><ui-icon n="pin" style="margin:0 3px 0 4px"></ui-icon><combo-box w="83" t=" All" tw="18"></combo-box><ui-icon n="gear" style="margin-left:3px"></ui-icon></filter-row>
 <div class="box" style="flex:1;padding:1px 0 0 2px;border-top-color:#999">${['i(v1)','i(v2)','i(v3)','i(v4)','i(v5)','i(v6)','i(v7)','v(0)','v(0v)','*v(a)','*v(b)','v(c)','v(d)','*v(out_1)','#v(out_2)','v(out_3)','v(vdd)','*v(vin)'].map(s=>{const b=s[0]=='*',k=s[0]=='#',t=s.replace(/[*#]/,'');return `<signal-row ${b?'blue':''} ${k?'sel':''} icon="${k?'sVs':t[0]=='i'?'sI':'sV'}" t="${t}"></signal-row>`}).join('')}</div><div style="height:1px;background:#111;flex:none"></div>`);
/* Waveform canvas, drawn in window coordinates */
def('wave-plot',':host{display:block}text{font:12px "DejaVu Sans",sans-serif;fill:#111}',()=>{
  const G='#8fbc8f';let o='';
  const R=(x,y,w,h,f)=>{o+=`<rect x="${x}" y="${y}" width="${w}" height="${h}" fill="${f}"/>`};
  const V=(x,a,b,f)=>R(x-2,a,5,b-a,f),H=(a,b,y,f)=>R(a,y-2,b-a,5,f);
  const tx=(x,y,t,an,f,ex='')=>{o+=`<text x="${x}" y="${y}" text-anchor="${an||'start'}" ${f?`style="fill:${f}"`:''} ${ex}>${t}</text>`};
  const P=(d,f,s)=>{o+=`<path d="${d}" fill="${f}" ${s?`stroke="${s}"`:''}/>`};
  R(256,211,1662,816,'#fff');R(257,211,1,816,'#d4d0c8');
  R(258,211,1660,1,G);R(258,230,1660,1,G);
  const tops=[231,485,738],ends=[484,737,990];
  const ys=[[235,263,290,317,344,372,399,426,453,480],[488,516,543,570,597,625,652,679,706,733],[751,777,803,829,855,881,907,933,959,985]];
  const lab=['1.8','1.6','1.4','1.2','1','0.8','0.6','0.4','0.2','0'];
  for(const x of[527,764,1001,1238,1475,1712])for(let p=0;p<3;p++)o+=`<path d="M${x}.5 ${tops[p]+1}V${ends[p]}" stroke="#999" stroke-dasharray="2 4"/>`;
  ys.forEach((c,p)=>{
    c.forEach((y,i)=>{o+=`<path d="M384 ${y}.5H1903" stroke="#999" stroke-dasharray="2 4"/>`;R(379,y,6,1,G);
      if(i<9)for(let k=1;k<5;k++)R(381,Math.round(y+(c[i+1]-y)*k/5),4,1,G);
      tx(378.5,(i==0&&p<2?y+4:y)+4.5,lab[i],'end');});
    R(359,ends[p]-1,3,1,G);
  });
  R(384,231,1,759,G);
  for(const y of[484,737])R(258,y,1646,1,G);
  tx(276,243,'v(a)','start','#a52a2a');tx(276,496,'v(b)','start','#00f');tx(276,749,'v(out_2)','start','#f00');
  tx(304.500,243,'test.t','start',G);tx(304.500,496,'test.t','start',G);tx(331.500,749,'t','start',G);
  R(339,232,1,250,'#fff');
  for(const y of[243,496,749])tx(385,y,'(lin)');
  /* panel scrollbars */
  R(336,231,3,759,G);R(339,231,1,759,'#fff');R(354,231,1,759,G);
  const vs=(x,w,a,b)=>{R(x,a,w,b-a,'#a8a8a8');R(x+2,a+10,w-4,b-a-20,'#c8c8c8');R(x+2,a+10,w-4,1,'#eee');R(x+2,a+10,1,b-a-20,'#f2f2f2');R(x+w-3,a+10,1,b-a-20,'#888');R(x+2,b-11,w-4,1,'#777');
    const m=x+w/2;P(`M${m} ${a+1}L${m+4.5} ${a+9.500}H${m-4.5}z`,'#d0d0d0','#888');P(`M${m} ${b-1}L${m+4.5} ${b-9.500}H${m-4.5}z`,'#d0d0d0','#888');P(`M${m} ${a+1}L${m-4.5} ${a+9}`,'none','#fff');P(`M${m} ${b-1}L${m-4.5} ${b-9}`,'none','#fff')};
  vs(340,14,231,484);vs(340,14,485,737);vs(340,14,738,990);
  R(1903,231,1,780,G);vs(1904,13,231,990);
  const hs=(a,b,c,d)=>{R(a,1012,b-a,14,'#a8a8a8');R(c,1014,d-c,10,'#c8c8c8');R(c,1014,d-c,1,'#f0f0f0');R(c,1014,1,10,'#f0f0f0');R(c,1023,d-c,1,'#888');R(d-1,1014,1,10,'#888');
    P(`M${a+.5} 1019L${a+7.500} 1014.500V1023.500z`,'#d0d0d0','#999');P(`M${b-.5} 1019L${b-7.500} 1014.500V1023.500z`,'#d0d0d0','#999')};
  R(258,990,1660,2,G);R(258,1011,1660,1,G);hs(274,339,282,311);hs(385,1903,393,1894);
  for(let n=-80;n<=240;n+=10){const x=Math.min(1902,Math.floor(764.4+n*4.74)),M=n%50==0;R(x,M?224:226,1,M?6:4,'#000');R(x,992,1,M?6:5,'#000');
    if(M){const t=n?n+'n':'0';tx(x,222,t,'middle');tx(x,1008.500,t,'middle')}}
  tx(259.500,1008.500,'TIME(sec) (lin)');
  const a='#a52a2a';
  V(764,233,483,a);H(762,861,235,a);V(859,233,462,a);V(860,460,483,a);H(858,955,480,a);V(953,420,483,a);V(954,233,422,a);H(952,1051,235,a);V(1049,233,483,a);H(1047,1145,480,a);V(1143,233,483,a);H(1141,1240,235,a);V(1238,233,298,a);V(1239,296,483,a);H(1237,1335,480,a);V(1333,233,483,a);H(1331,1430,235,a);V(1428,233,483,a);H(1426,1525,480,a);
  const b='#00f';
  V(764,486,736,b);H(762,956,488,b);V(954,486,736,b);H(952,1145,733,b);V(1143,486,736,b);H(1141,1335,488,b);V(1333,486,715,b);V(1334,713,736,b);H(1332,1525,733,b);
  const c='#f00';
  V(764,740,988,c);H(762,861,985,c);V(859,832,988,c);V(860,749,833,c);H(858,1145,751,c);V(953,751,763,c);V(955,751,757,c);V(954,751,989,c);V(1049,751,759,c);V(1143,739,922,c);V(1144,921,988,c);H(1142,1240,985,c);V(1238,979,988,c);V(1239,749,981,c);H(1237,1525,751,c);V(1334,751,875,c);V(1333,751,989,c);V(1428,751,759,c);
  return `<svg width="1662" height="816" viewBox="256 211 1662 816"><g shape-rendering="crispEdges">${o}</g></svg>`;
});
def('view-toolbar',`:host{display:flex;height:27px;border-top:1px solid #fff;border-bottom:1px solid #6e6a64;align-items:center;padding-left:8px;background:#d4d0c8}
 ui-icon{width:23px}.s{width:6px;height:19px;background:linear-gradient(90deg,transparent 3px,#888 3px,#888 4px,#fff 4px,#fff 5px,transparent 5px);flex:none}
 .in{width:39px;height:18px;background:#fff;border:1px solid #fff;border-top:1px solid #333;border-left:2px solid #333;outline:0;padding-left:3px;line-height:16px;font-size:12px;flex:none}.d{border:3px solid transparent;border-top-color:#aaa;border-bottom:0;margin:14px 5px 0 7px}`,
 ()=>{const s='<span class="s"></span>',i=l=>l.split(' ').map(n=>`<ui-icon n="${n}"></ui-icon>`).join('');
 return `<span style="width:1px;height:18px;background:#888"></span>${i('z1 z2 z3 z4 z5 z6')}<span class="s" style="width:7px"></span>${i('cursor bars tri abox pulse dots curve')}${s}${i('left right curve2')}${s}${i('dsel bx move1 move2')}${s}${i('eraser arrows')}<i class="d"></i><span class="s" style="width:5px;margin-right:-1px"></span><span style="line-height:18px;font-size:12px;margin-right:-1px">x</span><span class="in">0</span>`});
def('wave-window',`:host{display:flex;flex-direction:column;flex:1;height:866px;border-left:1px solid #111;box-shadow:-1px 0 #777;border-right:2px solid #111;border-bottom:1px solid #111;box-sizing:border-box}
 .t{display:flex;height:22px;flex:none}.tab{background:#00008b;color:#fff;width:113px;display:flex;align-items:center;padding-left:12px;height:24px;margin-bottom:-2px;position:relative}`,
 ()=>`<div class="t"><span class="tab">${T('waveview 1',69)}<ui-icon n="xw" style="margin-left:6px"></ui-icon></span></div><view-toolbar></view-toolbar><wave-plot style="flex:none;margin-top:0"></wave-plot>`);
def('status-bar',`:host{display:flex;height:27px;background:#d4d0c8;border-bottom:1px solid #fff;align-items:center;justify-content:flex-end}
 .p{width:110px;height:22px;border:2px solid #6e6a64;border-right:1px solid #fff;border-bottom:1px solid #fff}.n{width:42px;padding-left:11px}`,
 '<span class="p"></span><span class="n">0%</span>');
def('task-button',`:host{display:flex;flex:none;width:177px;height:22px;margin-right:2.100px;border:1px solid #9a9894;border-radius:3px;background:linear-gradient(#fff,#f4f3f2 50%,#e9e8e6);align-items:center;padding-left:6px;box-sizing:border-box;white-space:pre}
 :host([on]){background:#c6c4c0;border-color:#888}ui-icon{width:16px;margin-right:8px}fit-text{padding-top:2px}`,a=>`<ui-icon n="${a('icon')}"></ui-icon>${T(a('t'),a('w'))}`);
def('task-bar',`:host{display:flex;height:25px;background:#edeceb;padding-top:2px;box-sizing:border-box}
 .g{width:5px;height:18px;margin:2px 3px 0 4px;background:radial-gradient(#999 .8px,transparent 1px) 0 0/3px 3px;flex:none}
 .w{display:flex;width:72px;height:21px;margin:0 14px 0 8px;background:#a8a6a2;border-top:1px solid #888;border-left:1px solid #888}.w span{width:36px;background:#d4e4f8;display:flex;justify-content:center;align-items:center;border:1px solid #eee}`,
 ()=>`<span class="g"></span>${[['doc','PowerPoint 簡報',103],['term','終端機',39],['term','終端機',39],['gedit','[circuit.spi (~/Desk⋯',139],['ff2','[Mozilla Firefox（...',129],['app16','Custom WaveView ⋯',139,1],['folder','Labs',30],['term2','[ 終端機 ]',50],['folder','Lab8',32],['folder','result_file',66]].map(b=>`<task-button icon="${b[0]}" t="${b[1]}" w="${b[2]}" ${b[3]?'on':''}></task-button>`).join('')}
 <span class="w"><span><ui-icon n="app16"></ui-icon></span></span><ui-icon n="trash"></ui-icon>`);
def('wave-desktop',`:host{display:flex;flex-direction:column;width:1920px;height:1080px;overflow:hidden}.m{display:flex;height:866px}.g{width:5px;border-left:1px solid #fff;background:#d4d0c8}`,
 `<top-panel></top-panel><title-bar></title-bar><menu-tabs></menu-tabs><tool-ribbon></tool-ribbon><div class="m"><left-dock></left-dock><span class="g"></span><wave-window></wave-window></div><status-bar></status-bar><task-bar></task-bar>`);
</script>
</body>
</html>
